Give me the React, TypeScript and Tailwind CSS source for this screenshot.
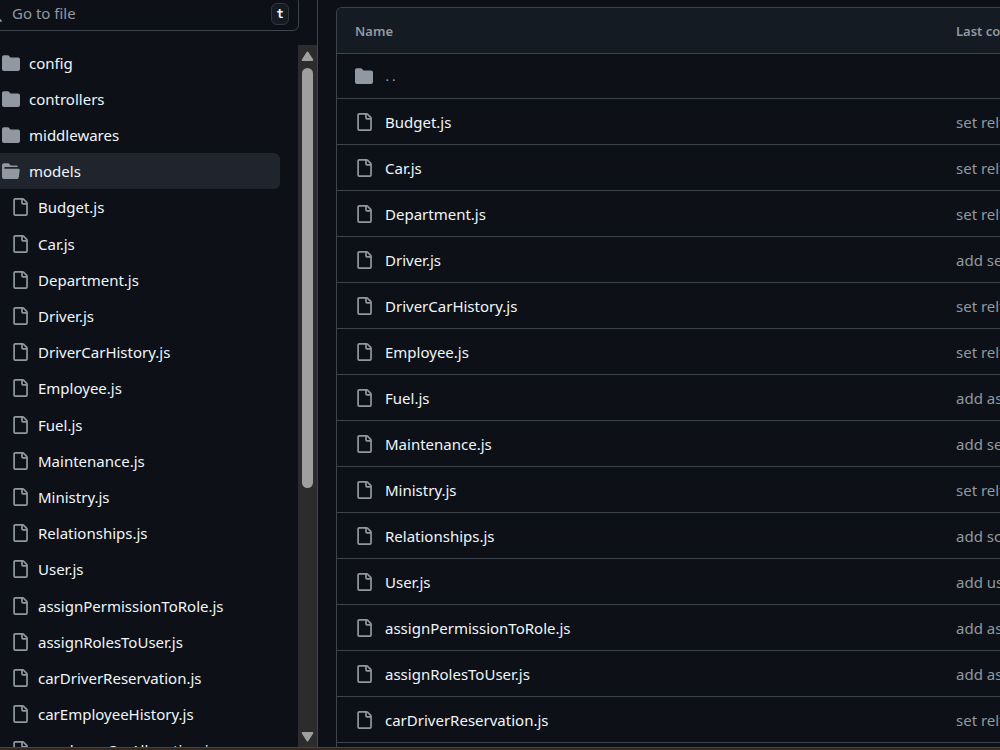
import { useState } from 'react';

const folders = ['config', 'controllers', 'middlewares', 'models'];

const files = [
    { name: 'Budget.js', message: 'set reltions' },
    { name: 'Car.js', message: 'set reltions' },
    { name: 'Department.js', message: 'set reltions' },
    { name: 'Driver.js', message: 'add seeders' },
    { name: 'DriverCarHistory.js', message: 'set reltions' },
    { name: 'Employee.js', message: 'set reltions' },
    { name: 'Fuel.js', message: 'add assign' },
    { name: 'Maintenance.js', message: 'add seeders' },
    { name: 'Ministry.js', message: 'set reltions' },
    { name: 'Relationships.js', message: 'add scopes' },
    { name: 'User.js', message: 'add user' },
    { name: 'assignPermissionToRole.js', message: 'add assign' },
    { name: 'assignRolesToUser.js', message: 'add assign' },
    { name: 'carDriverReservation.js', message: 'set reltions' },
    { name: 'carEmployeeHistory.js', message: 'set reltions' },
    { name: 'employeeCarAllocation.js', message: 'set reltions' },
];

const FileIcon = () => (
    <svg viewBox="0 0 16 16" fill="currentColor" aria-hidden="true" className="size-[18px] shrink-0 text-[#9198a1]">
        <path d="M2 1.75C2 .784 2.784 0 3.75 0h6.586c.464 0 .909.184 1.237.513l2.914 2.914c.329.328.513.773.513 1.237v9.586A1.75 1.75 0 0 1 13.25 16h-9.5A1.75 1.75 0 0 1 2 14.25Zm1.75-.25a.25.25 0 0 0-.25.25v12.5c0 .138.112.25.25.25h9.5a.25.25 0 0 0 .25-.25V6h-2.75A1.75 1.75 0 0 1 9 4.25V1.5Zm6.75.062V4.25c0 .138.112.25.25.25h2.688l-.011-.013-2.914-2.914-.013-.011Z" />
    </svg>
);

const FolderIcon = ({ open = false }: { open?: boolean }) => (
    <svg viewBox="0 0 16 16" fill="currentColor" aria-hidden="true" className="size-[18px] shrink-0 text-[#9198a1]">
        {open ? (
            <path d="M.513 1.513A1.75 1.75 0 0 1 1.75 1h3.5c.55 0 1.07.26 1.4.7l.9 1.2a.25.25 0 0 0 .2.1H13a1 1 0 0 1 1 1v.5H2.75a.75.75 0 0 0 0 1.5h11.978a1 1 0 0 1 .994 1.117L15 13.25A1.75 1.75 0 0 1 13.25 15H1.75A1.75 1.75 0 0 1 0 13.25V2.75c0-.464.184-.91.513-1.237Z" />
        ) : (
            <path d="M1.75 1A1.75 1.75 0 0 0 0 2.75v10.5C0 14.216.784 15 1.75 15h12.5A1.75 1.75 0 0 0 16 13.25v-8.5A1.75 1.75 0 0 0 14.25 3H7.5a.25.25 0 0 1-.2-.1l-.9-1.2C6.07 1.26 5.55 1 5 1H1.75Z" />
        )}
    </svg>
);

const ScrollBar = () => (
    <div className="w-[19px] shrink-0 bg-[#2c2c2c] flex flex-col items-center py-1">
        <svg viewBox="0 0 13 14" aria-hidden="true" className="w-[13px] h-[14px] shrink-0 text-[#9f9f9f]">
            <path d="M6.5 3.5 L11.3 11 H1.7 Z" fill="currentColor" stroke="currentColor" strokeWidth="2" strokeLinejoin="round" />
        </svg>
        <div className="flex-1 w-[11px] my-[5px]">
            <div className="h-[64%] rounded-full bg-[#9f9f9f]" />
        </div>
        <svg viewBox="0 0 13 14" aria-hidden="true" className="w-[13px] h-[14px] shrink-0 text-[#9f9f9f]">
            <path d="M1.7 4 H11.3 L6.5 11.5 Z" fill="currentColor" stroke="currentColor" strokeWidth="2" strokeLinejoin="round" />
        </svg>
    </div>
);

export default function App() {
    const [search, setSearch] = useState('');
    const [selected, setSelected] = useState('models');

    return (
        <div className="h-screen flex flex-col overflow-hidden bg-[#0d1117] text-[#f0f6fc] font-['Noto_Sans','Open_Sans',sans-serif] text-[15px] leading-5">
            <div className="flex-1 min-h-0 flex">
                {/* File tree */}
                <aside className="w-[318px] shrink-0 flex flex-col border-r border-[#3d444d]">
                    <div className="-mt-1 -ml-4 mr-[18px] h-[35px] shrink-0 flex items-center gap-[9px] pr-[9px] border border-[#3d444d] rounded-md">
                        <svg viewBox="0 0 16 16" fill="currentColor" aria-hidden="true" className="size-[18px] shrink-0 text-[#9198a1]">
                            <path d="M10.68 11.74a6 6 0 0 1-7.922-8.982 6 6 0 0 1 8.982 7.922l3.04 3.04a.749.749 0 0 1-.326 1.275.749.749 0 0 1-.734-.215ZM11.5 7a4.499 4.499 0 1 0-8.997 0A4.499 4.499 0 0 0 11.5 7Z" />
                        </svg>
                        <input
                            type="text"
                            aria-label="Go to file"
                            placeholder="Go to file"
                            value={search}
                            onChange={(e) => setSearch(e.target.value)}
                            className="flex-1 min-w-0 pb-0.5 bg-transparent outline-none placeholder:text-[#9198a1]"
                        />
                        <kbd className="w-[18px] h-[22px] shrink-0 flex items-center justify-center rounded-md border border-[#2f3742] bg-[#151b23] font-['DejaVu_Sans_Mono',monospace] text-xs font-bold">
                            t
                        </kbd>
                    </div>

                    <div className="flex-1 min-h-0 mt-[14px] flex">
                        <nav aria-label="Files" className="flex-1 min-w-0 overflow-hidden pr-[18px]">
                            <ul className="[&>li:nth-child(5n)]:pb-px">
                                {folders.map((name) => (
                                    <li key={name}>
                                        <button
                                            onClick={() => setSelected(name)}
                                            className={`w-full h-9 pl-[2px] flex items-center gap-[9px] rounded-r-md cursor-pointer ${selected === name ? 'bg-[#20252d]' : ''}`}
                                        >
                                            <FolderIcon open={selected === name} />
                                            {name}
                                        </button>
                                    </li>
                                ))}
                                {files.map((file) => (
                                    <li key={file.name}>
                                        <button
                                            onClick={() => setSelected(file.name)}
                                            className={`w-full h-9 pl-[11px] flex items-center gap-[9px] rounded-r-md cursor-pointer ${selected === file.name ? 'bg-[#20252d]' : ''}`}
                                        >
                                            <FileIcon />
                                            {file.name}
                                        </button>
                                    </li>
                                ))}
                            </ul>
                        </nav>
                        <ScrollBar />
                    </div>
                </aside>

                {/* Directory contents */}
                <main className="flex-1 min-w-0 overflow-hidden pl-[18px] pt-[7px]">
                    <div className="border-l border-t border-[#3d444d] rounded-tl-md overflow-hidden">
                        <table className="w-full table-fixed text-left whitespace-nowrap">
                            <thead>
                                <tr className="h-[45px] bg-[#151b23] border-b border-[#3d444d] text-[13px] text-[#9198a1]">
                                    <th className="pl-[18px] pt-0.5 font-semibold">Name</th>
                                    <th className="w-[44px] pt-0.5 font-semibold overflow-hidden">Last commit message</th>
                                </tr>
                            </thead>
                            <tbody>
                                <tr className="h-[45px] border-b border-[#3d444d]">
                                    <td colSpan={2} className="pl-[18px]">
                                        <a href="#parent" aria-label="Parent directory" className="flex items-center gap-[11px] text-[#9198a1]">
                                            <FolderIcon />
                                            <span className="pt-1 font-['Liberation_Mono',monospace] text-[11px] font-bold">..</span>
                                        </a>
                                    </td>
                                </tr>
                                {files.map((file) => (
                                    <tr key={file.name} className="h-[46px] border-b border-[#3d444d]">
                                        <td className="pl-[18px] pt-0.5">
                                            <div className="flex items-center gap-3">
                                                <FileIcon />
                                                <a href={`#${file.name}`}>{file.name}</a>
                                            </div>
                                        </td>
                                        <td className="pt-0.5 overflow-hidden text-[#9198a1]">{file.message}</td>
                                    </tr>
                                ))}
                            </tbody>
                        </table>
                    </div>
                </main>
            </div>
            <div className="h-[3px] shrink-0 bg-[#33271f] border-t border-[#54402f]" />
        </div>
    );
}
